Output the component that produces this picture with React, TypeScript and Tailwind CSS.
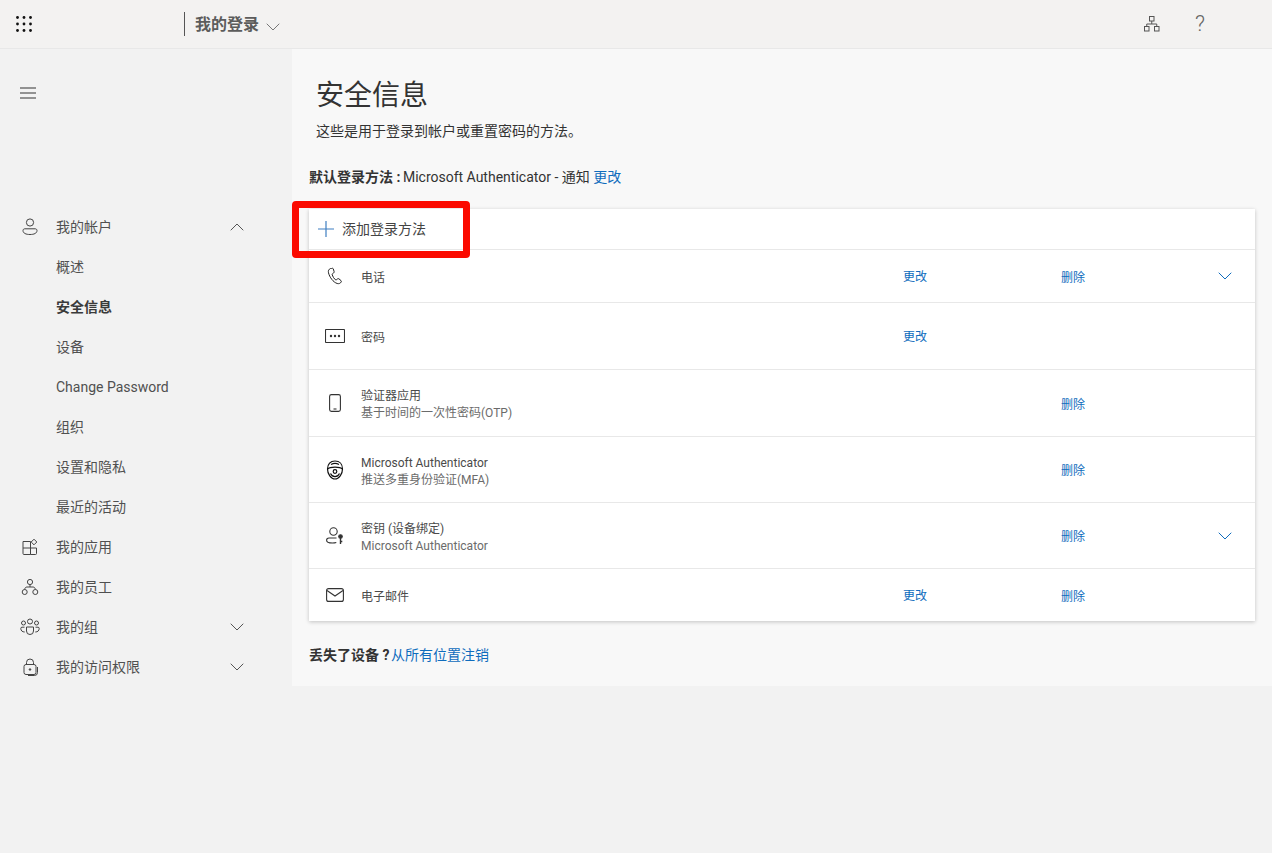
import React from 'react';
import { ChevronDown, ChevronUp } from 'lucide-react';

const GridIcon = () => (
  <svg width="16" height="16" viewBox="0 0 16 16" fill="#111">
    {[1.5, 8, 14.5].map((y) =>
      [1.5, 8, 14.5].map((x) => <circle key={`${x}-${y}`} cx={x} cy={y} r="1.4" />),
    )}
  </svg>
);

const MenuIcon = () => (
  <svg width="16" height="12" viewBox="0 0 16 12" stroke="#333" strokeWidth="1.2">
    <path d="M0 1h16M0 6h16M0 11h16" />
  </svg>
);

const OrgIcon = () => (
  <svg width="16" height="16" viewBox="0 0 16 16" fill="none" stroke="#555" strokeWidth="1">
    <rect x="5.5" y="0.5" width="4.5" height="4.5" />
    <rect x="0.5" y="10.5" width="4.5" height="4.5" />
    <rect x="10.5" y="10.5" width="4.5" height="4.5" />
    <path d="M7.75 5v3M2.75 10.5V8h10v2.5" />
  </svg>
);

const Outline: React.FC<{ children: React.ReactNode; w?: number; h?: number; vb?: string; color?: string }> = ({
  children,
  w = 18,
  h = 18,
  vb = '0 0 18 18',
  color = '#444',
}) => (
  <svg width={w} height={h} viewBox={vb} fill="none" stroke={color} strokeWidth="1">
    {children}
  </svg>
);

const navIcons: Record<string, React.ReactNode> = {
  account: (
    <Outline>
      <circle cx="9" cy="4.5" r="3.6" />
      <path d="M2 12.5c0-1 .8-1.7 1.8-1.7h10.4c1 0 1.8.7 1.8 1.7 0 2.8-3 4-7 4s-7-1.200-7-4z" />
    </Outline>
  ),
  apps: (
    <Outline>
      <path d="M2 3.500h7.500v13H3a1 1 0 0 1-1-1zM2 10h13.500v5.500a1 1 0 0 1-1 1H9.500" />
      <path d="M13 1.200l2.800 2.800-2.800 2.800-2.800-2.800z" />
    </Outline>
  ),
  staff: (
    <Outline>
      <circle cx="9" cy="4" r="2.600" />
      <circle cx="3.700" cy="14" r="2.500" />
      <circle cx="14.300" cy="14" r="2.500" />
      <path d="M9 6.600v2.400M3.700 11.500c0-1.500 1-2.500 2.300-2.500h6c1.300 0 2.300 1 2.300 2.500" />
    </Outline>
  ),
  groups: (
    <Outline w={20} vb="0 0 20 18">
      <circle cx="10" cy="3.500" r="2.500" />
      <circle cx="3.500" cy="5" r="2" />
      <circle cx="16.500" cy="5" r="2" />
      <path d="M6.500 9h7v4a3.500 3.500 0 0 1-7 0zM4.500 9.200H2c-.8 0-1.200.5-1.200 1.200 0 2.300 1.500 3.600 3.900 3.600M15.500 9.200H18c.8 0 1.200.5 1.200 1.200 0 2.300-1.500 3.600-3.900 3.600" />
    </Outline>
  ),
  access: (
    <Outline>
      <path d="M5.500 6.500V4.500a3.500 3.500 0 0 1 7 0v2" />
      <rect x="3" y="6.500" width="12" height="10" rx="2" />
      <circle cx="9" cy="11.500" r="0.800" fill="#444" />
      <path d="M16.500 9v5.500a3 3 0 0 1-3 3H7" />
    </Outline>
  ),
};

interface NavEntry {
  label: string;
  icon?: string;
  chevron?: 'up' | 'down';
  active?: boolean;
}

const navItems: NavEntry[] = [
  { label: '我的帐户', icon: 'account', chevron: 'up' },
  { label: '概述' },
  { label: '安全信息', active: true },
  { label: '设备' },
  { label: 'Change Password' },
  { label: '组织' },
  { label: '设置和隐私' },
  { label: '最近的活动' },
  { label: '我的应用', icon: 'apps' },
  { label: '我的员工', icon: 'staff' },
  { label: '我的组', icon: 'groups', chevron: 'down' },
  { label: '我的访问权限', icon: 'access', chevron: 'down' },
];

const methodIcons: Record<string, React.ReactNode> = {
  phone: (
    <Outline color="#222">
      <path d="M4.500 1.500c-1.800.8-2.500 2.300-2 4.300 1 4.300 4.800 9.500 8.700 10.700 1.800.5 3.200-.2 4-1.500.3-.5.2-1-.2-1.400l-2-1.700c-.5-.4-1-.4-1.500 0l-.8.700c-.5.400-1 .4-1.500 0-1.400-1.300-2.400-3-3-4.800-.2-.6 0-1 .5-1.300l.9-.6c.5-.3.700-.8.500-1.400l-.9-2.800c-.3-.5-.8-.6-1.700-.2z" />
    </Outline>
  ),
  password: (
    <svg width="20" height="14" viewBox="0 0 20 14" fill="none" stroke="#333" strokeWidth="1.100">
      <rect x="0.500" y="0.500" width="19" height="13" rx="0.800" />
      <circle cx="6" cy="7" r="1.200" fill="#333" stroke="none" />
      <circle cx="10" cy="7" r="1.200" fill="#333" stroke="none" />
      <circle cx="14" cy="7" r="1.200" fill="#333" stroke="none" />
    </svg>
  ),
  mobile: (
    <svg width="12" height="18" viewBox="0 0 12 18" fill="none" stroke="#333" strokeWidth="1.100">
      <rect x="0.600" y="0.600" width="10.800" height="16.800" rx="1.800" />
      <path d="M4.500 15h3" />
    </svg>
  ),
  authenticator: (
    <svg width="18" height="20" viewBox="0 0 18 20" fill="none" stroke="#111" strokeWidth="1.200">
      <path d="M9 1c4.500 0 7.500 3 7.500 8 0 5-3.500 10-7.500 10S1.500 14 1.500 9c0-5 3-8 7.500-8z" />
      <path d="M1.500 9C4 6.500 14 6.500 16.500 9M5 4.500c2.500-1.300 5.500-1.300 8 0" />
      <circle cx="9" cy="11.500" r="1.800" />
      <path d="M4.500 13.500c1 2 2.500 3.200 4.500 3.200s3.500-1.200 4.500-3.200" />
    </svg>
  ),
  passkey: (
    <svg width="18" height="18" viewBox="0 0 18 18" fill="none" stroke="#333" strokeWidth="1.100">
      <circle cx="7.500" cy="4.500" r="3.700" />
      <path d="M10.500 11H3c-1.300 0-2.400 1-2.400 2.200 0 2 2.700 2.800 5.900 2.800 1.500 0 2.800-.2 3.800-.5" />
      <circle cx="14.500" cy="9.500" r="1.800" fill="#333" />
      <path d="M14.500 10.500v6.500M14.500 14.500h1.800" strokeWidth="1.400" />
    </svg>
  ),
  mail: (
    <svg width="18" height="14" viewBox="0 0 18 14" fill="none" stroke="#333" strokeWidth="1.100">
      <rect x="0.600" y="0.600" width="16.800" height="12.800" rx="2" />
      <path d="M1 2.500l8 5.500 8-5.500" />
    </svg>
  ),
};

interface Method {
  icon: string;
  title: string;
  sub?: string;
  change?: boolean;
  remove?: boolean;
  expand?: boolean;
  rowClass: string;
}

const methods: Method[] = [
  { icon: 'phone', title: '电话', change: true, remove: true, expand: true, rowClass: 'h-[53px]' },
  { icon: 'password', title: '密码', change: true, rowClass: 'h-[67px]' },
  { icon: 'mobile', title: '验证器应用', sub: '基于时间的一次性密码(OTP)', remove: true, rowClass: 'h-[67px]' },
  { icon: 'authenticator', title: 'Microsoft Authenticator', sub: '推送多重身份验证(MFA)', remove: true, rowClass: 'h-[66px]' },
  { icon: 'passkey', title: '密钥 (设备绑定)', sub: 'Microsoft Authenticator', remove: true, expand: true, rowClass: 'h-[66px]' },
  { icon: 'mail', title: '电子邮件', change: true, remove: true, rowClass: 'h-[53px]' },
];

const Sidebar = () => (
  <aside className="w-[292px] shrink-0 bg-[#f2f2f2]">
    <div className="pl-5 pt-[38px] h-[158px]">
      <MenuIcon />
    </div>
    <nav>
      {navItems.map((item) => (
        <div key={item.label} className="relative flex h-10 items-center pl-14 pr-[43px] text-[#505050] text-[14px]">
          {item.icon && (
            <span className="absolute left-[20px] top-0 flex h-10 w-5 items-center justify-center">
              {navIcons[item.icon]}
            </span>
          )}
          <span className={item.active ? 'font-bold text-[#3a3a3a]' : ''}>{item.label}</span>
          {item.chevron === 'up' && <ChevronUp className="ml-auto h-6 w-6 text-[#555]" strokeWidth={1} />}
          {item.chevron === 'down' && <ChevronDown className="ml-auto h-6 w-6 text-[#555]" strokeWidth={1} />}
        </div>
      ))}
    </nav>
  </aside>
);

const MethodRow: React.FC<{ method: Method }> = ({ method }) => (
  <div className={`flex items-center border-t border-[#e8e8e8] ${method.rowClass}`}>
    <div className="flex w-[52px] shrink-0 items-center justify-center">{methodIcons[method.icon]}</div>
    <div className="w-[542px] shrink-0 pt-[4px] text-[12px] leading-[17px] text-[#4a4a4a]">
      <div>{method.title}</div>
      {method.sub && <div className="text-[#6b6b6b]">{method.sub}</div>}
    </div>
    <div className="w-[158px] shrink-0 pt-[2px] text-[12px] text-[#0f6cbd]">{method.change && '更改'}</div>
    <div className="w-[158px] shrink-0 pt-[3px] text-[12px] text-[#0f6cbd]">{method.remove && '删除'}</div>
    {method.expand && <ChevronDown className="-ml-[6px] h-6 w-6 text-[#0f6cbd]" strokeWidth={1} />}
  </div>
);

export default function App() {
  return (
    <div className={'relative flex min-h-[853px] flex-col bg-[#f2f2f2] [font-family:Roboto,"Noto_Sans_CJK_SC",sans-serif]'}>
      <header className="flex h-[49px] items-center border-b border-[#e8e8e8] bg-[#f3f2f1]">
        <div className="flex w-[184px] shrink-0 pl-4">
          <GridIcon />
        </div>
        <div className="h-6 w-px bg-[#555]" />
        <span className="ml-2.5 pt-[2px] text-[16px] font-bold text-[#5c5c5c]">我的登录</span>
        <ChevronDown className="ml-[2px] mt-[6px] h-6 w-6 text-[#777]" strokeWidth={1} />
        <div className="ml-auto flex items-center">
          <OrgIcon />
          <span className="ml-[35px] mr-[67px] text-[22px] leading-none font-light text-[#666]">?</span>
        </div>
      </header>

      <div className="flex">
        <Sidebar />
        <main className="h-[637px] flex-1 bg-[#f8f8f8] px-[17px]">
          <h1 className="ml-[7px] mt-[28px] text-[28px] leading-[38px] text-[#333]">安全信息</h1>
          <p className="ml-[7px] mt-[6px] text-[14px] leading-5 text-[#333]">这些是用于登录到帐户或重置密码的方法。</p>
          <div className="mt-[26px] text-[14px] leading-5 text-[#333]">
            <span className="mr-[-1px] font-bold">默认登录方法 :</span>{' '}
            Microsoft Authenticator - 通知 <span className="text-[#0f6cbd]">更改</span>
          </div>

          <section className="mt-[22px] bg-white shadow-[0_1px_4px_rgba(0,0,0,0.22)]">
            <div className="flex h-10 items-center pl-[9px] text-[14px] text-[#444]">
              <svg width="16" height="16" viewBox="0 0 16 16" stroke="#3f7fc1" strokeWidth="1.200">
                <path d="M8 0v16M0 8h16" />
              </svg>
              <span className="ml-2">添加登录方法</span>
            </div>
            {methods.map((m) => (
              <MethodRow key={m.icon} method={m} />
            ))}
          </section>

          <div className="mt-6 text-[14px] leading-5 text-[#333]">
            <span className="mr-[-2px] font-bold">丢失了设备 ?</span>{' '}
            <span className="text-[#0f6cbd]">从所有位置注销</span>
          </div>
        </main>
      </div>

      {/* red highlight drawn over the add button */}
      <div className="pointer-events-none absolute left-[292px] top-[201px] h-[57px] w-[178px] rounded-[4px] border-[7px] border-[#fb0a00]" />
    </div>
  );
}
